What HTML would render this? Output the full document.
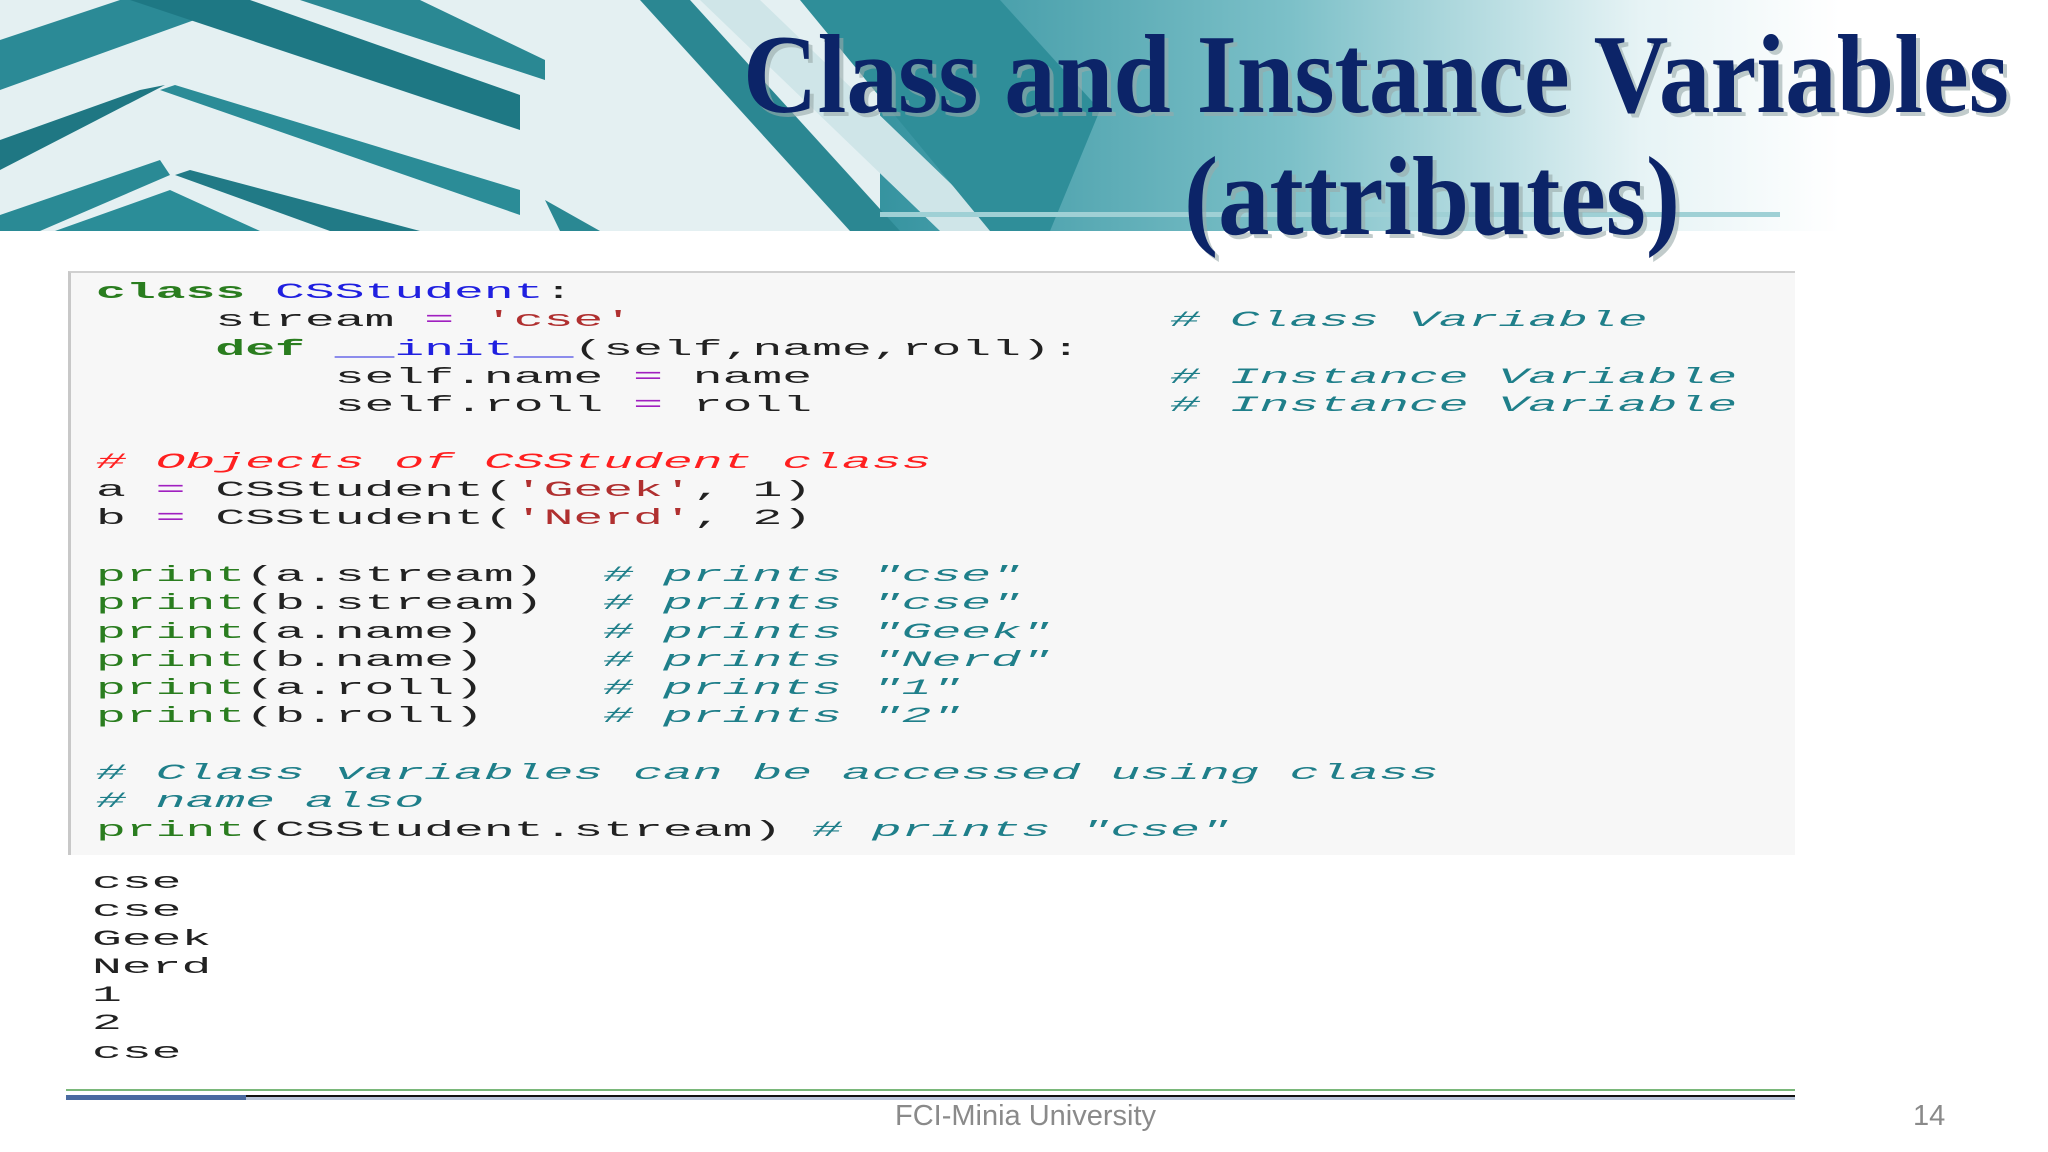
<!DOCTYPE html>
<html><head><meta charset="utf-8"><style>
html,body{margin:0;padding:0}
body{width:2048px;height:1152px;position:relative;overflow:hidden;background:#fff;font-family:"Liberation Sans",sans-serif}
.hdr{position:absolute;left:0;top:0;width:2048px;height:231px}
.ttl{position:absolute;left:0;top:0;width:2048px;height:270px}
.box{position:absolute;left:68px;top:271px;width:1727px;height:584px;background:#f7f7f7;border-top:2px solid #d0d0d0;border-left:3px solid #c8c8c8;box-sizing:border-box}
pre{margin:0;font-family:"Liberation Mono",monospace;font-size:22px;line-height:28.3px;color:#222;transform:scaleX(2.26);transform-origin:0 0;position:absolute}
.k{color:#2a7d1f;font-weight:bold}.c{color:#2020e0}.s{color:#b03030}.o{color:#a020c0}
.cm{color:#1f7f8a;font-style:italic}.r{color:#ff2020;font-style:italic}.p{color:#2a7d1f}
.ft{position:absolute;top:1100px;color:#8a8a8a;font-size:29px}
</style></head><body>
<svg class="hdr" width="2048" height="231" viewBox="0 0 2048 231">
<defs><linearGradient id="g" x1="0" x2="1"><stop offset="0" stop-color="#2f8f9c"/><stop offset="0.45" stop-color="#7cc0c8"/><stop offset="0.8" stop-color="#e6f3f5"/><stop offset="1" stop-color="#fff"/></linearGradient></defs>
<rect x="0" y="0" width="2048" height="231" fill="#fff"/>
<rect x="840" y="0" width="1000" height="231" fill="url(#g)"/>
<rect x="0" y="0" width="880" height="231" fill="#e4f0f2"/>
<polygon points="0,40 120,0 250,0 0,90" fill="#2b8a96"/>
<polygon points="0,140 140,90 165,85 0,170" fill="#1f7783"/>
<polygon points="0,215 160,160 170,175 40,231 0,231" fill="#2a8a95"/>
<polygon points="130,0 250,0 520,95 520,130" fill="#1e7884"/>
<polygon points="160,90 175,85 520,190 520,215" fill="#2b8c97"/>
<polygon points="175,175 190,170 420,231 330,231" fill="#217a86"/>
<polygon points="55,231 170,190 260,231" fill="#2b8d98"/>
<polygon points="300,0 420,0 545,60 545,80" fill="#2a8893"/>
<polygon points="545,200 560,231 600,231" fill="#2a8893"/>
<polygon points="640,0 690,0 900,231 850,231" fill="#2b8792"/>
<polygon points="700,0 760,0 1000,231 940,231" fill="#cfe5e8"/>
<polygon points="800,0 1000,0 1100,110 1050,231 990,231" fill="#2f8e99"/>
<rect x="880" y="212" width="900" height="5" fill="#9fd0d5"/>
</svg>
<svg class="ttl" width="2048" height="270" viewBox="0 0 2048 270">
<text x="743" y="112" textLength="1266" lengthAdjust="spacingAndGlyphs" font-family="Liberation Serif,serif" font-weight="bold" font-size="112" fill="#9aa" opacity="0.6" transform="translate(4,4)">Class and Instance Variables</text>
<text x="743" y="112" textLength="1266" lengthAdjust="spacingAndGlyphs" font-family="Liberation Serif,serif" font-weight="bold" font-size="112" fill="#0c2468">Class and Instance Variables</text>
<text x="1188" y="238" textLength="496" lengthAdjust="spacingAndGlyphs" font-family="Liberation Serif,serif" font-weight="bold" font-size="112" fill="#9aa" opacity="0.6">(attributes)</text>
<text x="1184" y="234" textLength="496" lengthAdjust="spacingAndGlyphs" font-family="Liberation Serif,serif" font-weight="bold" font-size="112" fill="#0c2468">(attributes)</text>
</svg>
<div class="box"></div>
<pre style="left:96px;top:279px"><span class="k">class</span> <span class="c">CSStudent</span>:
    stream <span class="o">=</span> <span class="s">'cse'</span>                  <span class="cm"># Class Variable</span>
    <span class="k">def</span> <span class="c">__init__</span>(self,name,roll):
        self.name <span class="o">=</span> name            <span class="cm"># Instance Variable</span>
        self.roll <span class="o">=</span> roll            <span class="cm"># Instance Variable</span>

<span class="r"># Objects of CSStudent class</span>
a <span class="o">=</span> CSStudent(<span class="s">'Geek'</span>, 1)
b <span class="o">=</span> CSStudent(<span class="s">'Nerd'</span>, 2)

<span class="p">print</span>(a.stream)  <span class="cm"># prints "cse"</span>
<span class="p">print</span>(b.stream)  <span class="cm"># prints "cse"</span>
<span class="p">print</span>(a.name)    <span class="cm"># prints "Geek"</span>
<span class="p">print</span>(b.name)    <span class="cm"># prints "Nerd"</span>
<span class="p">print</span>(a.roll)    <span class="cm"># prints "1"</span>
<span class="p">print</span>(b.roll)    <span class="cm"># prints "2"</span>

<span class="cm"># Class variables can be accessed using class</span>
<span class="cm"># name also</span>
<span class="p">print</span>(CSStudent.stream) <span class="cm"># prints "cse"</span></pre>
<pre style="left:92px;top:869px">cse
cse
Geek
Nerd
1
2
cse</pre>
<div style="position:absolute;left:66px;top:1089px;width:1729px;height:2px;background:#7ab87a"></div>
<div style="position:absolute;left:66px;top:1095px;width:1729px;height:2px;background:#111"></div>
<div style="position:absolute;left:66px;top:1097px;width:1729px;height:3px;background:#b8c4d8"></div>
<div style="position:absolute;left:66px;top:1095px;width:180px;height:5px;background:#4a6aa0"></div>
<div class="ft" style="left:895px">FCI-Minia University</div>
<div class="ft" style="left:1913px">14</div>
</body></html>
